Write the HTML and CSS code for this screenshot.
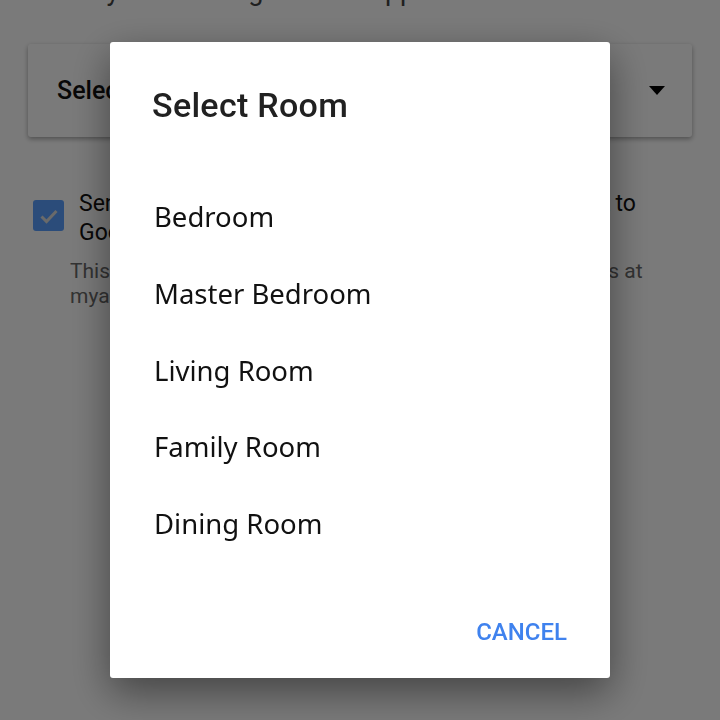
FILE: index.html
```html
<!doctype html>
<html>
  <head>
    <meta charset="utf-8">
    <meta name="viewport" content="width=device-width, initial-scale=1">
    <link rel="stylesheet" href="styles.css">
  </head>
  <body>
    <div class="page">
      <p class="intro">Identify in the Google Home app</p>

      <div class="picker">
        <span class="picker-label">Select a room</span>
        <span class="picker-arrow"></span>
      </div>

      <div class="consent">
        <span class="checkbox">
          <svg viewBox="0 0 24 24" width="24" height="24">
            <path d="M4.5 12.5l5 5 10-10.5" fill="none" stroke="#ddd" stroke-width="3"/>
          </svg>
        </span>
        <span class="consent-label">Send device usage statistics and crash reports back to<br>Google</span>
      </div>
      <p class="consent-note">This data helps improve Google products. Manage settings at<br>myaccount.google.com</p>
    </div>

    <!-- modal room picker -->
    <div class="scrim">
      <div class="dialog">
        <h2 class="dialog-title">Select Room</h2>
        <ul class="rooms">
          <li>Bedroom</li>
          <li>Master Bedroom</li>
          <li>Living Room</li>
          <li>Family Room</li>
          <li>Dining Room</li>
        </ul>
        <div class="actions">
          <button class="btn-text">CANCEL</button>
        </div>
      </div>
    </div>
  </body>
</html>
```

FILE: styles.css
```css
html, body {
  margin: 0;
  padding: 0;
  height: 100%;
}
body {
  background: #fff;
  font-family: Roboto, "Liberation Sans", sans-serif;
  color: #212121;
  overflow: hidden;
}
p {
  margin: 0;
}

/* page behind the dialog */
.page {
  padding: 0 28px;
}
.intro {
  margin-top: -25px;
  font-size: 27px;
  line-height: 32px;
  color: #444;
  padding-left: 2px;
  white-space: nowrap;
}
.picker {
  margin-top: 37px;
  height: 93px;
  display: flex;
  align-items: center;
  justify-content: space-between;
  padding: 0 27px 0 29px;
  border-radius: 3px;
  background: #fff;
  box-shadow: 0 2px 5px rgba(0, 0, 0, 0.35);
}
.picker-label {
  font-size: 25px;
  font-weight: 500;
  color: #111;
}
.picker-arrow {
  width: 0;
  height: 0;
  border-left: 8px solid transparent;
  border-right: 8px solid transparent;
  border-top: 9px solid #000;
}
.consent {
  margin-top: 52px;
  display: flex;
  align-items: flex-start;
  gap: 15px;
  padding-left: 5px;
}
.checkbox {
  flex: none;
  width: 31px;
  height: 31px;
  margin-top: 11px;
  border-radius: 3px;
  background: #5aa0ff;
  display: flex;
  align-items: center;
  justify-content: center;
}
.consent-label {
  font-size: 23px;
  line-height: 29px;
  color: #111;
  white-space: nowrap;
}
.consent-note {
  margin-top: 12px;
  padding-left: 42px;
  font-size: 21px;
  line-height: 25px;
  color: #6a6a6a;
  white-space: nowrap;
}

/* modal */
.scrim {
  position: fixed;
  inset: 0;
  background: rgba(0, 0, 0, 0.52);
  display: flex;
  align-items: center;
  justify-content: center;
}
.dialog {
  width: 500px;
  height: 636px;
  box-sizing: border-box;
  padding: 43px 43px 34px 42px;
  background: #fff;
  border-radius: 3px;
  box-shadow: 0 14px 40px rgba(0, 0, 0, 0.45);
  display: flex;
  flex-direction: column;
}
.dialog-title {
  margin: 0;
  font-size: 34px;
  line-height: 40px;
  font-weight: 500;
  letter-spacing: 0.3px;
  color: #212121;
}
.rooms {
  list-style: none;
  margin: 54px 0 0 0;
  padding: 0 0 0 2px;
}
.rooms li {
  height: 76.75px;
  line-height: 76.75px;
  font-family: "Noto Sans", "Liberation Sans", sans-serif;
  font-size: 27.5px;
  color: #111;
}
.actions {
  margin-top: auto;
  display: flex;
  justify-content: flex-end;
}
.btn-text {
  border: 0;
  padding: 0;
  background: none;
  font-family: Roboto, "Liberation Sans", sans-serif;
  font-size: 24px;
  line-height: 24px;
  font-weight: 500;
  color: #3f82ee;
}
```
